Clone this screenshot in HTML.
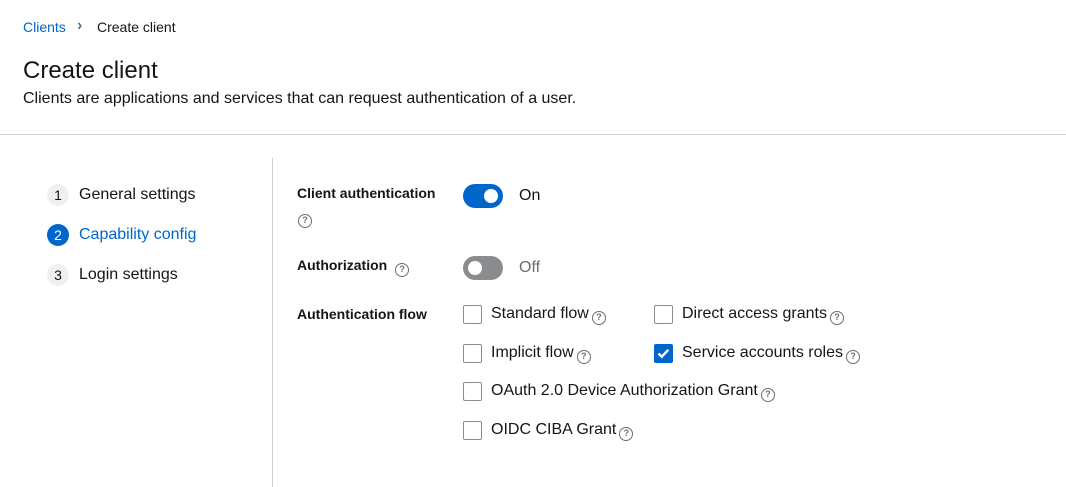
<!DOCTYPE html>
<html><head><meta charset="utf-8"><style>
*{margin:0;padding:0;box-sizing:border-box}
body{width:1066px;height:487px;background:#fff;font-family:"Liberation Sans",sans-serif;color:#151515;position:relative;overflow:hidden}
.a{position:absolute;white-space:nowrap}
.c{position:absolute;width:22px;height:22px;border-radius:50%;background:#f0f0f0;font-size:14px;text-align:center;line-height:22px;color:#151515}
.n{font-size:16px;line-height:20px}
.lb{font-size:14px;font-weight:bold;line-height:18px}
.cb{position:absolute;width:19px;height:19px;border:1px solid #8a8d90;border-radius:2px;background:#fff}
.t{font-size:16px;line-height:20px}
.h{display:inline-block;width:14px;height:14px;border:1.4px solid #6a6e73;border-radius:50%;font-size:9px;line-height:11px;text-align:center;color:#6a6e73;font-weight:bold;vertical-align:-2px;margin-left:3px}
</style></head><body>
<div class="a" style="left:23px;top:19px;font-size:14px;color:#0066cc">Clients</div>
<div class="a" style="left:77px;top:17px;font-size:16px;color:#6a6e73;font-weight:bold">&#x203A;</div>
<div class="a" style="left:97px;top:19px;font-size:14px">Create client</div>
<div class="a" style="left:23px;top:57px;font-size:24px;line-height:28px">Create client</div>
<div class="a" style="left:23px;top:89px;font-size:16px;line-height:19px">Clients are applications and services that can request authentication of a user.</div>
<div class="a" style="left:0;top:134px;width:1066px;height:1px;background:#d2d2d2"></div>
<div class="a" style="left:272px;top:158px;width:1px;height:329px;background:#d2d2d2"></div>
<div class="c" style="left:47px;top:184px">1</div><div class="a n" style="left:79px;top:185px">General settings</div>
<div class="c" style="left:47px;top:224px;background:#0066cc;color:#fff">2</div><div class="a n" style="left:79px;top:225px;color:#0066cc">Capability config</div>
<div class="c" style="left:47px;top:264px">3</div><div class="a n" style="left:79px;top:265px">Login settings</div>
<div class="a lb" style="left:297px;top:184px">Client authentication</div>
<div class="a" style="left:298px;top:208px"><span class="h" style="margin:0">?</span></div>
<div class="a lb" style="left:297px;top:256px">Authorization <span class="h" style="margin-left:4px">?</span></div>
<div class="a lb" style="left:297px;top:305px">Authentication flow</div>
<div class="a" style="left:463px;top:184px;width:40px;height:24px;border-radius:12px;background:#0066cc"><div style="position:absolute;left:21px;top:5px;width:14px;height:14px;border-radius:50%;background:#fff"></div></div>
<div class="a t" style="left:519px;top:186px">On</div>
<div class="a" style="left:463px;top:256px;width:40px;height:24px;border-radius:12px;background:#8a8d90"><div style="position:absolute;left:5px;top:5px;width:14px;height:14px;border-radius:50%;background:#fff"></div></div>
<div class="a t" style="left:519px;top:258px;color:#6a6e73">Off</div>
<div class="cb" style="left:463px;top:305px"></div><div class="a t" style="left:491px;top:304px">Standard flow<span class="h">?</span></div>
<div class="cb" style="left:654px;top:305px"></div><div class="a t" style="left:682px;top:304px">Direct access grants<span class="h">?</span></div>
<div class="cb" style="left:463px;top:344px"></div><div class="a t" style="left:491px;top:343px">Implicit flow<span class="h">?</span></div>
<div class="cb" style="left:654px;top:344px;background:#0066cc;border-color:#0066cc"><svg width="19" height="19" viewBox="0 0 19 19" style="position:absolute;left:-1px;top:-1px"><path d="M4.5 9.5l3.2 3.3 6.5-7" stroke="#fff" stroke-width="2.4" fill="none"/></svg></div><div class="a t" style="left:682px;top:343px">Service accounts roles<span class="h">?</span></div>
<div class="cb" style="left:463px;top:382px"></div><div class="a t" style="left:491px;top:381px">OAuth 2.0 Device Authorization Grant<span class="h">?</span></div>
<div class="cb" style="left:463px;top:421px"></div><div class="a t" style="left:491px;top:420px">OIDC CIBA Grant<span class="h">?</span></div>
</body></html>
